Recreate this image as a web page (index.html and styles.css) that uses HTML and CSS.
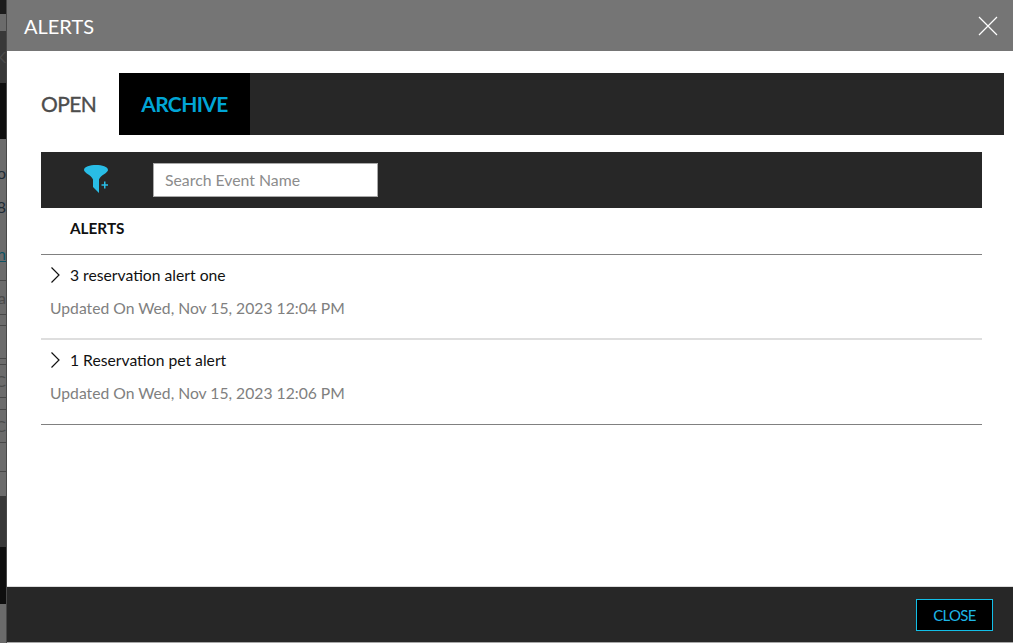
FILE: index.html
```html
<!DOCTYPE html>
<html lang="en">
<head>
<meta charset="utf-8">
<title>Alerts</title>
<link rel="stylesheet" href="styles.css">
</head>
<body>
<div class="backdrop">
  <div class="bg-band b-dark h14"></div>
  <div class="bg-band h17"></div>
  <div class="bg-band b-mid h52"><span class="frag frag-grey">K</span></div>
  <div class="bg-band b-black h56"></div>
  <div class="bg-band h62"><span class="frag">oo</span></div>
  <div class="bg-band h12"><span class="frag">8</span></div>
  <div class="bg-band h30"></div>
  <div class="bg-band h22"><span class="frag frag-link">n</span></div>
  <div class="bg-band h16 ruled"></div>
  <div class="bg-band h34 ruled"><span class="frag frag-grey">va</span></div>
  <div class="bg-band h11 ruled"></div>
  <div class="bg-band h33 ruled"></div>
  <div class="bg-band h6 ruled"></div>
  <div class="bg-band h33 ruled"><span class="frag frag-grey">C</span></div>
  <div class="bg-band h12 ruled"></div>
  <div class="bg-band h33 ruled"><span class="frag frag-grey">C</span></div>
  <div class="bg-band h29 ruled"></div>
  <div class="bg-band h24"></div>
  <div class="bg-band b-mid h51"></div>
  <div class="bg-band b-black h57"></div>
  <div class="bg-band h39"></div>
</div>
<div class="modal">
  <header class="modal-head">
    <h1 class="modal-title">ALERTS</h1>
    <svg class="close-x" width="20" height="20" viewBox="0 0 20 20"><path d="M1 1L19 19M19 1L1 19" stroke="#fff" stroke-width="1.2" fill="none"/></svg>
  </header>
  <main class="modal-body">
    <nav class="tabs">
      <div class="tab tab-open">OPEN</div>
      <div class="tab tab-archive">ARCHIVE</div>
    </nav>
    <div class="content">
      <div class="toolbar">
        <div class="filter-cell">
          <svg width="26" height="30" viewBox="0 0 26 30"><path d="M0 5C0 1.500 6 0 12 0S24 1.500 24 5C24 8 16.500 10 15 14.500V28L9 22V14.500C7.500 10 0 8 0 5Z" fill="#29bde6"/><path d="M17.500 20H24M20.750 16.500V23.500" stroke="#29bde6" stroke-width="1.500" fill="none"/></svg>
        </div>
        <input class="search" type="text" placeholder="Search Event Name">
      </div>
      <div class="list-head">ALERTS</div>
      <section class="alert">
        <div class="alert-name"><svg class="chev" width="10" height="16" viewBox="0 0 10 16"><path d="M1.500 0.500L9 8L1.500 15.500" stroke="#111" stroke-width="1.200" fill="none"/></svg>3 reservation alert one</div>
        <div class="alert-date">Updated On Wed, Nov 15, 2023 12:04 PM</div>
      </section>
      <section class="alert alert-last">
        <div class="alert-name"><svg class="chev" width="10" height="16" viewBox="0 0 10 16"><path d="M1.500 0.500L9 8L1.500 15.500" stroke="#111" stroke-width="1.200" fill="none"/></svg>1 Reservation pet alert</div>
        <div class="alert-date">Updated On Wed, Nov 15, 2023 12:06 PM</div>
      </section>
    </div>
  </main>
  <footer class="modal-foot">
    <button class="close-btn" type="button">CLOSE</button>
  </footer>
</div>
</body>
</html>
```
FILE: styles.css
```css
* { box-sizing: border-box; }
html, body { margin: 0; padding: 0; height: 100%; overflow: hidden; }
body {
  display: flex;
  width: 1013px;
  height: 643px;
  background: #6b6b6b;
  font-family: Lato, sans-serif;
}
.backdrop {
  width: 7px;
  height: 643px;
  display: flex;
  flex-direction: column;
  flex: none;
  overflow: hidden;
  border-right: 1px solid #484848;
}
.bg-band {
  flex: none;
  display: flex;
  align-items: center;
  justify-content: flex-end;
  background: #6b6b6b;
  overflow: hidden;
}
.b-dark { background: #1c1c1c; }
.b-mid { background: #383838; }
.b-black { background: #0e0e0e; }
.ruled { border-bottom: 1px solid #474747; }
.h6 { height: 6px; }
.h11 { height: 11px; }
.h12 { height: 12px; }
.h14 { height: 14px; }
.h16 { height: 16px; }
.h17 { height: 17px; }
.h22 { height: 22px; }
.h24 { height: 24px; }
.h29 { height: 29px; }
.h30 { height: 30px; }
.h33 { height: 33px; }
.h34 { height: 34px; }
.h39 { height: 39px; }
.h51 { height: 51px; }
.h52 { height: 52px; }
.h56 { height: 56px; }
.h57 { height: 57px; }
.h62 { height: 62px; padding-top: 6px; }
.frag {
  flex: none;
  font-size: 16px;
  line-height: 12px;
  white-space: nowrap;
  color: #1d2a35;
}
.frag-grey { color: #4a4a4a; }
.frag-link { color: #0d5263; text-decoration: underline; }
.modal {
  width: 1006px;
  height: 643px;
  background: #fff;
  display: flex;
  flex-direction: column;
}
.modal-head {
  height: 51px;
  flex: none;
  background: #757575;
  display: flex;
  align-items: center;
  justify-content: space-between;
  padding: 0 15px 0 17px;
}
.modal-title {
  margin: 0;
  font-size: 20px;
  font-weight: 400;
  color: #fff;
}
.modal-body { flex: 1; padding-top: 22px; }
.tabs {
  height: 62px;
  margin-right: 9px;
  display: flex;
  background: #272727;
}
.tab {
  display: flex;
  align-items: center;
  padding-bottom: 1px;
  font-size: 21px;
  letter-spacing: -0.6px;
}
.tab-open {
  width: 112px;
  padding-left: 34px;
  background: #fff;
  color: #4d4d4d;
  -webkit-text-stroke: 0.35px #4d4d4d;
}
.tab-archive {
  width: 131px;
  justify-content: center;
  background: #000;
  color: #00a5d6;
  font-weight: 700;
}
.content { margin: 17px 31px 0 34px; }
.toolbar {
  height: 56px;
  background: #272727;
  display: flex;
  align-items: center;
}
.filter-cell {
  width: 112px;
  display: flex;
  justify-content: center;
}
.search {
  width: 225px;
  height: 34px;
  border: 1px solid #a9a9a9;
  background: #fff;
  padding: 0 11px 2px;
  font: 15.800px Lato, sans-serif;
  color: #333;
  outline: none;
}
.search::placeholder { color: #8c8c8c; opacity: 1; }
.list-head {
  height: 47px;
  padding: 0 0 6px 29px;
  display: flex;
  align-items: center;
  font-size: 15.300px;
  font-weight: 700;
  color: #111;
  border-bottom: 1px solid #808080;
}
.alert {
  height: 85px;
  padding-top: 9px;
  border-bottom: 2px solid #dedede;
}
.alert-last { border-bottom: 1px solid #808080; }
.alert-name {
  display: flex;
  align-items: center;
  height: 22px;
  padding-left: 9px;
  font-size: 15.700px;
  color: #111;
}
.chev { margin: 0 10px 0 0; flex: none; }
.alert-date {
  margin-top: 11px;
  padding-left: 9px;
  height: 22px;
  line-height: 22px;
  font-size: 15.700px;
  color: #808080;
}
.modal-foot {
  height: 57px;
  flex: none;
  background: #272727;
  border-top: 1px solid #dcdcdc;
  border-bottom: 1px solid #a8a8a8;
  display: flex;
  align-items: center;
  justify-content: flex-end;
  padding: 0 20px 0 0;
}
.close-btn {
  width: 77px;
  height: 32px;
  background: #000;
  border: 1px solid #12bfe8;
  color: #1eb6e6;
  font: 15px Lato, sans-serif;
  letter-spacing: -0.7px;
  padding: 0;
}
```
